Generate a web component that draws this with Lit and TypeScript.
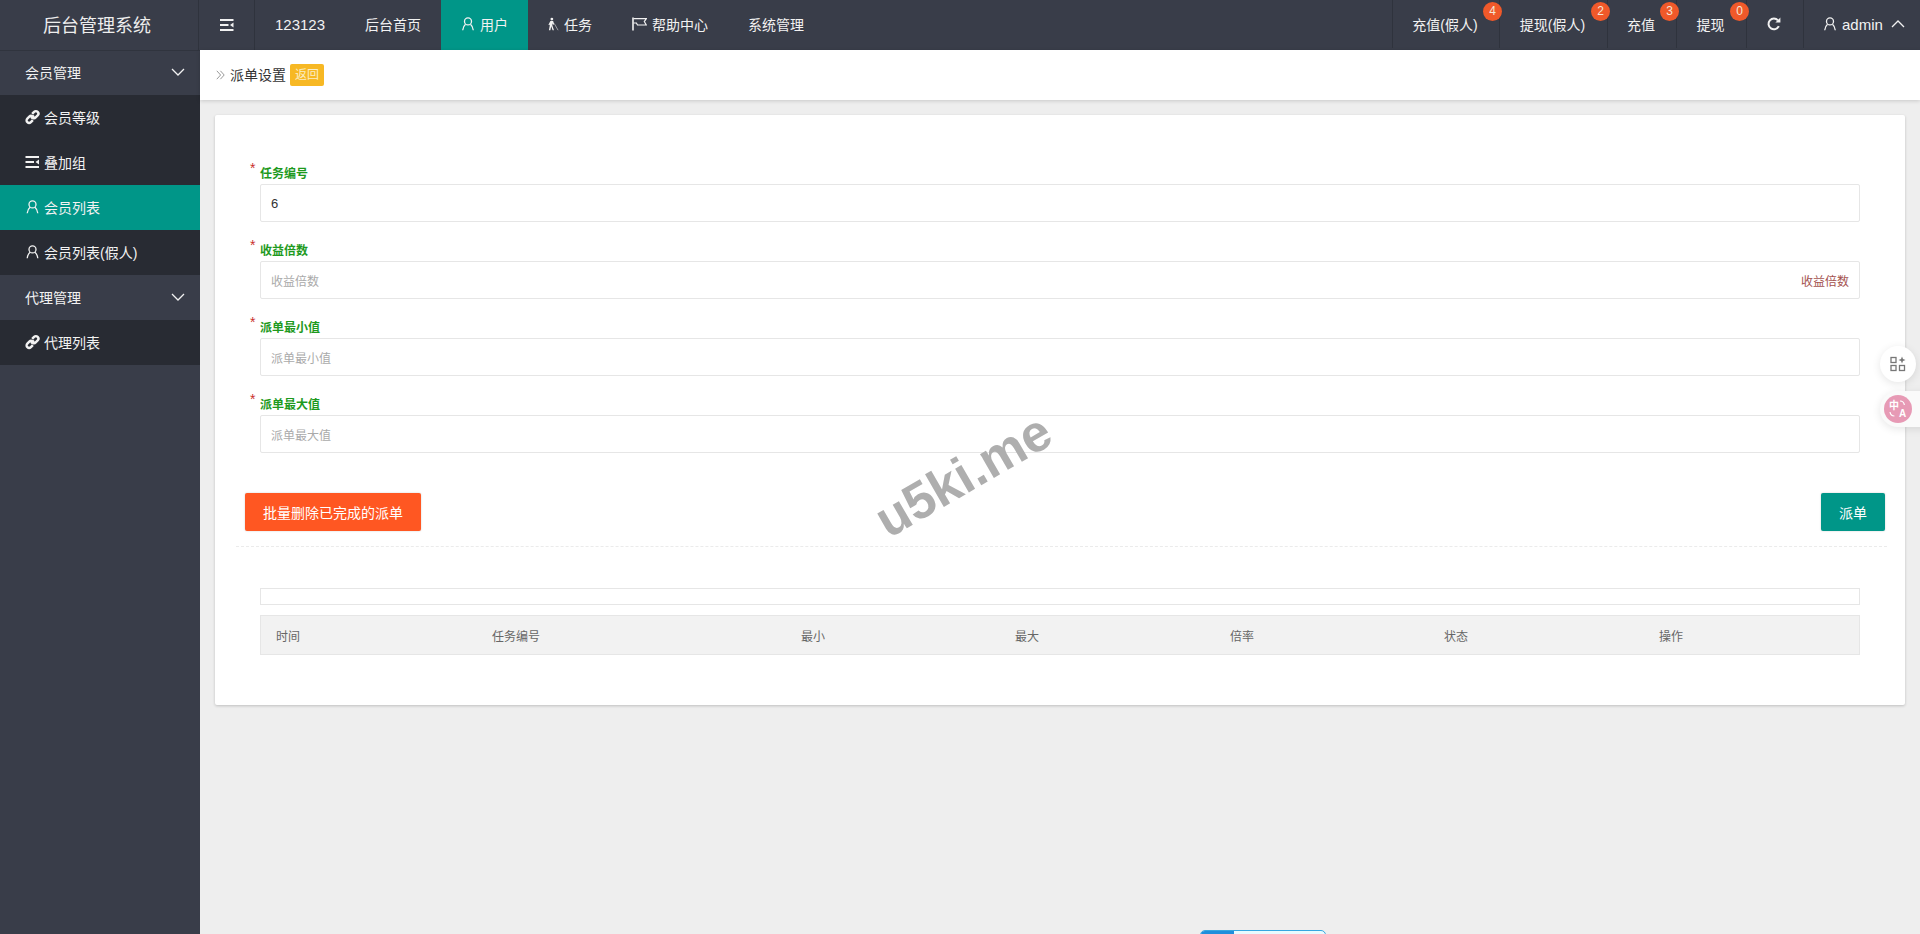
import { LitElement, html, css } from "lit";
import { customElement } from "lit/decorators.js";

const menuIcon = html`<svg class="ic" viewBox="0 0 14 14" width="14" height="14"><path d="M0 1h13.5v1.9H0zM0 11.1h13.5V13H0zM0 6.1h8.5v1.8H0z" fill="currentColor"/><path d="M13.5 4.6v4.8L10 7z" fill="currentColor"/></svg>`;
const userIcon = html`<svg class="ic" viewBox="0 0 14 14" width="14" height="14" fill="none" stroke="currentColor" stroke-width="1.3"><circle cx="7" cy="4.4" r="3.5"/><path d="M4.5 7.2C2.9 8.6 2 10.6 1.7 13.2M9.5 7.2c1.6 1.4 2.5 3.4 2.8 6"/></svg>`;
const linkIcon = html`<svg class="ic" viewBox="0 0 16 16" width="16" height="16" fill="none" stroke="currentColor" stroke-width="2.6"><path d="M6.4 9.6 9.6 6.4"/><path d="M7.6 4.6 9.7 2.5a2.6 2.6 0 0 1 3.8 3.8l-2.1 2.1a2.6 2.6 0 0 1-3.4.3"/><path d="M8.4 11.4 6.3 13.5a2.6 2.6 0 0 1-3.8-3.8l2.1-2.1a2.6 2.6 0 0 1 3.4-.3"/></svg>`;
const chevDown = html`<svg class="ic" viewBox="0 0 14 8" width="14" height="8" fill="none" stroke="currentColor" stroke-width="1.3"><path d="M1 1l6 6 6-6"/></svg>`;
const chevUp = html`<svg class="ic" viewBox="0 0 14 8" width="14" height="8" fill="none" stroke="currentColor" stroke-width="1.3"><path d="M1 7l6-6 6 6"/></svg>`;
const walkIcon = html`<svg class="ic" viewBox="0 0 12 14" width="11" height="14"><circle cx="4.2" cy="1.6" r="1.5" fill="currentColor"/><path d="M2.6 3.8h3l1.2 3.4-1.2.5L5 6.2l-.3 2.2 1.8 5.4H5L3.5 9.4l-.9 4.4H1l1.2-6.6-.7 1.2-1-.6z" fill="currentColor"/><path d="M6.8 6.4 11 13.8" stroke="currentColor" stroke-width=".6"/></svg>`;
const flagIcon = html`<svg class="ic" viewBox="0 0 15 14" width="15" height="14" fill="none" stroke="currentColor" stroke-width="1.2"><path d="M1 .5v13" stroke-width="1.6"/><path d="M1.5 1.6h12.8l-2 3 2 3.4H5.5L4.4 6H1.5"/></svg>`;
const refreshIcon = html`<svg class="ic" viewBox="0 0 14 14" width="14" height="14" fill="none" stroke="currentColor" stroke-width="2"><path d="M11.8 9.2A5.4 5.4 0 1 1 11 3.4"/><path d="M13.4.6v5h-5z" fill="currentColor" stroke="none"/></svg>`;
const crumbArrow = html`<svg class="ic arr" viewBox="0 0 9 10" width="9" height="10" fill="none" stroke="currentColor" stroke-width="1"><path d="M.8.8 4.6 5 .8 9.2M4.4.8 8.2 5 4.4 9.2"/></svg>`;

const rightItems = [
  { t: "充值(假人)", n: 4, w: 107 },
  { t: "提现(假人)", n: 2, w: 108 },
  { t: "充值", n: 3, w: 69 },
  { t: "提现", n: 0, w: 70 },
];
const fields = [
  { label: "任务编号", value: "6", ph: "" },
  { label: "收益倍数", value: "", ph: "收益倍数", suffix: "收益倍数" },
  { label: "派单最小值", value: "", ph: "派单最小值" },
  { label: "派单最大值", value: "", ph: "派单最大值" },
];
const cols = [
  { t: "时间", w: 216 },
  { t: "任务编号", w: 309 },
  { t: "最小", w: 214 },
  { t: "最大", w: 215 },
  { t: "倍率", w: 214 },
  { t: "状态", w: 215 },
  { t: "操作", w: 217 },
];

@customElement("app-root")
export class AppRoot extends LitElement {
  static styles = css`
    :host {
      display: flex;
      flex-direction: column;
      height: 100vh;
      overflow: hidden;
      position: relative;
      background: #eeeeee;
      font-family: "Liberation Sans", "Noto Sans CJK SC", sans-serif;
      font-size: 14px;
      color: #333;
    }
    .ic { display: block; flex: none; }
    .top { display: flex; height: 50px; flex: none; background: #393d49; color: #f2f2f2; }
    .logo { width: 199px; border-right: 1px solid #2f333d; display: flex; align-items: center; justify-content: center; font-size: 18px; color: #eee; padding: 0 4px 2px 0; box-sizing: border-box; }
    .burger { width: 56px; border-right: 1px solid #2f333d; display: flex; align-items: center; justify-content: center; box-sizing: border-box; }
    .nav { display: flex; }
    .nav a { display: flex; align-items: center; gap: 5px; padding: 0 20px 2px; }
    .nav a.num { font-size: 15px; }
    .nav a.on { background: #009688; }
    .spacer { flex: 1; }
    .rnav { display: flex; }
    .rnav .it { position: relative; display: flex; align-items: center; justify-content: center; box-sizing: border-box; border-left: 1px solid #2f333d; height: 48px; padding-right: 2px; }
    .rnav .ref { width: 57px; }
    .badge { position: absolute; z-index: 1; top: 2px; right: -3px; width: 19px; height: 19px; border-radius: 50%; background: #f0592a; color: #f5e6d8; font-size: 12px; line-height: 19px; text-align: center; }
    .rnav .user { width: 117px; gap: 5px; justify-content: flex-start; padding-left: 19px; padding-right: 0; }
    .user span { font-size: 15px; margin-right: 3px; }
    .body { flex: 1; display: flex; min-height: 0; }
    .side { width: 200px; flex: none; background: #393d49; color: #f2f2f2; border-top: 1px solid #30343e; box-sizing: border-box; }
    .grp { height: 45px; display: flex; align-items: center; justify-content: space-between; box-sizing: border-box; padding: 0 15px 2px 25px; }
    .side .grp:first-child { height: 44px; }
    .sub { height: 45px; display: flex; align-items: center; gap: 4px; box-sizing: border-box; padding: 0 0 2px 25px; background: #282b33; }
    .sub.on { background: #009688; }
    .sub .ic { width: 15px; }
    .main { flex: 1; min-width: 0; }
    .crumb { height: 50px; background: #fff; box-shadow: 0 1px 4px rgba(0,0,0,.16); display: flex; align-items: center; box-sizing: border-box; padding: 0 0 2px 16px; }
    .crumb .arr { color: #999; margin: 2px 5px 0 0; }
    .crumb .ret { margin: 2px 0 0 4px; width: 34px; height: 22px; border-radius: 2px; background: #f7b824; color: #fbeec6; font-size: 12px; line-height: 22px; text-align: center; }
    .card { margin: 15px 15px 0; height: 590px; box-sizing: border-box; background: #fff; border-radius: 2px; box-shadow: 0 1px 3px rgba(0,0,0,.2); padding-top: 45px; position: relative; }
    .field { margin: 0 45px 15px; }
    .lab { height: 24px; display: flex; align-items: center; font-size: 12px; font-weight: 700; color: #1e9a1e; position: relative; }
    .star { position: absolute; left: -10px; top: 0; color: #c9302c; font-size: 14px; font-weight: 400; }
    .box { height: 38px; box-sizing: border-box; border: 1px solid #e6e6e6; border-radius: 2px; display: flex; align-items: center; justify-content: space-between; padding: 0 10px 0 10px; font-size: 12px; background: #fff; }
    .val { color: #333; font-size: 13px; }
    .ph { color: #aaa; }
    .suf { color: #a4524f; }
    .acts { display: flex; justify-content: space-between; padding: 25px 20px 0 30px; }
    .btn { height: 38px; border-radius: 2px; color: #fff; display: flex; align-items: center; justify-content: center; box-shadow: 0 0 2px rgba(0,0,0,.2); }
    .btn.red { width: 176px; background: #ff5722; }
    .btn.green { width: 64px; background: #009688; }
    .dash { margin: 15px 18px 0 21px; border-top: 1px dashed #ebebeb; }
    .empty { margin: 41px 45px 0; height: 17px; box-sizing: border-box; border: 1px solid #e6e6e6; }
    .thead { margin: 10px 45px 0; height: 40px; box-sizing: border-box; border: 1px solid #e6e6e6; background: #f2f2f2; display: flex; align-items: center; font-size: 12px; color: #666; }
    .thead div { padding-left: 15px; box-sizing: border-box; flex: none; }
    .mark { position: absolute; left: 863px; top: 445px; width: 200px; text-align: center; font-size: 52px; line-height: 60px; font-weight: 700; color: #aeaeae; transform: rotate(-30deg); white-space: nowrap; }
    .float1 { position: absolute; left: 1880px; top: 346px; width: 36px; height: 36px; border-radius: 50%; background: #fff; box-shadow: 0 2px 8px rgba(0,0,0,.1); display: flex; align-items: center; justify-content: center; color: #777; }
    .float2 { position: absolute; left: 1880px; top: 391px; width: 50px; height: 36px; border-radius: 18px 0 0 18px; background: #fafafa; box-shadow: 0 2px 8px rgba(0,0,0,.1); }
    .pink { position: absolute; left: 4px; top: 4px; width: 28px; height: 28px; border-radius: 50%; background: #e79ab5; color: #fff; font-size: 10px; font-weight: 700; overflow: hidden; }
    .pink span { position: absolute; line-height: 10px; }
    .pink .zh { left: 5px; top: 6px; }
    .pink .en { left: 15px; top: 14px; }
    .pink svg { position: absolute; left: 0; top: 0; }
    .bar { position: absolute; left: 1200px; top: 930px; width: 126px; height: 10px; box-sizing: border-box; border: 1px solid #37a7e0; background: #e8fbff; border-radius: 6px; overflow: hidden; }
    .bar i { display: block; width: 33px; height: 100%; background: #1f8fdc; }
  `;

  render() {
    return html`
      <div class="top">
        <div class="logo">后台管理系统</div>
        <div class="burger">${menuIcon}</div>
        <div class="nav">
          <a class="num">123123</a>
          <a>后台首页</a>
          <a class="on">${userIcon}用户</a>
          <a>${walkIcon}任务</a>
          <a>${flagIcon}帮助中心</a>
          <a>系统管理</a>
        </div>
        <div class="spacer"></div>
        <div class="rnav">
          ${rightItems.map((r) => html`<div class="it" style="width:${r.w}px">${r.t}<span class="badge">${r.n}</span></div>`)}
          <div class="it ref">${refreshIcon}</div>
          <div class="it user">${userIcon}<span>admin</span>${chevUp}</div>
        </div>
      </div>
      <div class="body">
        <div class="side">
          <div class="grp">会员管理${chevDown}</div>
          <div class="sub">${linkIcon}会员等级</div>
          <div class="sub">${menuIcon}叠加组</div>
          <div class="sub on">${userIcon}会员列表</div>
          <div class="sub">${userIcon}会员列表(假人)</div>
          <div class="grp">代理管理${chevDown}</div>
          <div class="sub">${linkIcon}代理列表</div>
        </div>
        <div class="main">
          <div class="crumb">${crumbArrow}派单设置<span class="ret">返回</span></div>
          <div class="card">
            ${fields.map((f) => html`
              <div class="field">
                <div class="lab"><span class="star">*</span>${f.label}</div>
                <div class="box">
                  ${f.value ? html`<span class="val">${f.value}</span>` : html`<span class="ph">${f.ph}</span>`}
                  ${f.suffix ? html`<span class="suf">${f.suffix}</span>` : ""}
                </div>
              </div>`)}
            <div class="acts">
              <div class="btn red">批量删除已完成的派单</div>
              <div class="btn green">派单</div>
            </div>
            <div class="dash"></div>
            <div class="empty"></div>
            <div class="thead">
              ${cols.map((c) => html`<div style="width:${c.w}px">${c.t}</div>`)}
            </div>
          </div>
        </div>
      </div>
      <div class="mark">u5ki.me</div>
      <div class="float1">
        <svg viewBox="0 0 16 16" width="16" height="16" fill="none" stroke="currentColor" stroke-width="1.3">
          <rect x="1" y="1.5" width="5" height="5"/><rect x="1" y="9.5" width="5" height="5"/><rect x="9.5" y="9.5" width="5" height="5"/>
          <path d="M12 .5l1 2.5 2.5 1-2.5 1-1 2.5-1-2.5-2.5-1 2.5-1z" fill="currentColor" stroke="none"/>
        </svg>
      </div>
      <div class="float2"><div class="pink">
        <span class="zh">中</span><span class="en">A</span>
        <svg viewBox="0 0 28 28" width="28" height="28" fill="none" stroke="#fff" stroke-width="1.2"><path d="M16 6c2.4 0 4 1.4 4.4 4M6 17c.4 2.6 2 4 4.4 4"/></svg>
      </div></div>
      <div class="bar"><i></i></div>
    `;
  }
}
